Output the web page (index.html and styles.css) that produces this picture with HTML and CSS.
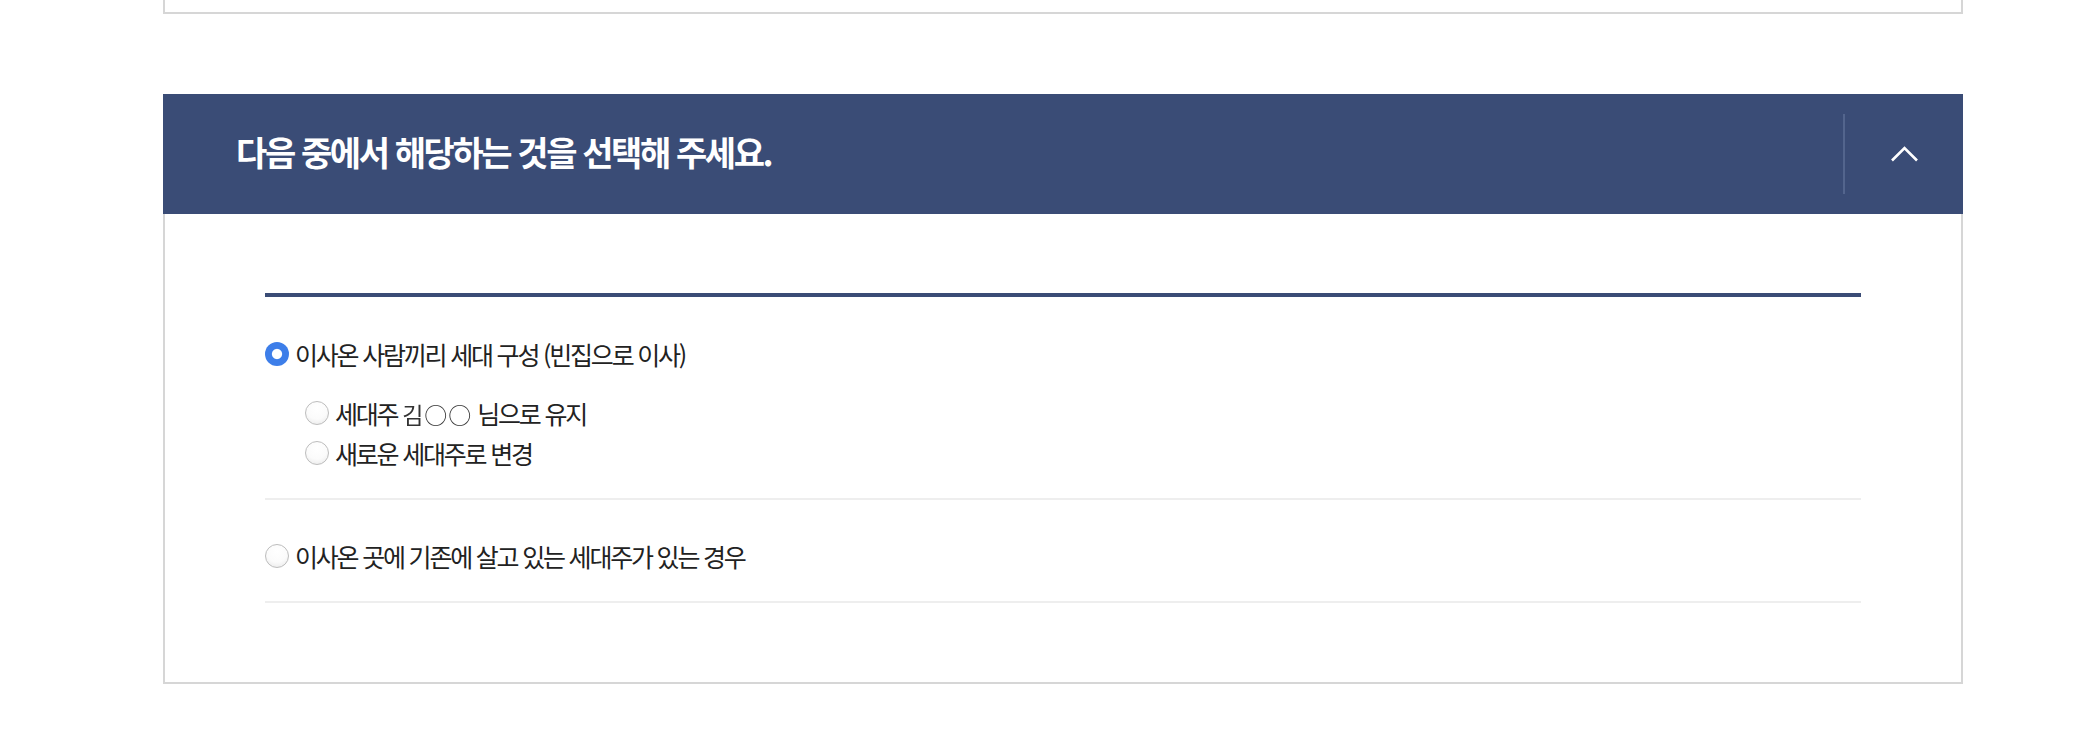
FILE: index.html
```html
<!DOCTYPE html>
<html lang="ko">
<head>
<meta charset="utf-8">
<title>세대 구성 선택</title>
<link rel="stylesheet" href="styles.css">
</head>
<body>
<div class="page">
  <div class="prev-card"></div>

  <section class="panel">
    <header class="panel-head">
      <h2 class="panel-title">다음 중에서 해당하는 것을 선택해 주세요.</h2>
      <div class="panel-toggle">
        <svg class="chev" width="29" height="17" viewBox="0 0 29 17" aria-hidden="true">
          <polyline points="2,15.5 14.5,3 27,15.5" fill="none" stroke="#ffffff" stroke-width="2.6" stroke-linejoin="miter"/>
        </svg>
      </div>
    </header>

    <div class="panel-body">
      <div class="options">
        <div class="option">
          <label class="row">
            <span class="radio checked"></span>
            <span class="label">이사온 사람끼리 세대 구성 (빈집으로 이사)</span>
          </label>
          <div class="sub">
            <label class="row">
              <span class="radio"></span>
              <span class="label">세대주 <span class="masked">김○○</span> 님으로 유지</span>
            </label>
            <label class="row">
              <span class="radio"></span>
              <span class="label">새로운 세대주로 변경</span>
            </label>
          </div>
        </div>
        <div class="option">
          <label class="row">
            <span class="radio"></span>
            <span class="label">이사온 곳에 기존에 살고 있는 세대주가 있는 경우</span>
          </label>
        </div>
      </div>
    </div>
  </section>
</div>
</body>
</html>
```

FILE: styles.css
```css
* { box-sizing: border-box; }

html, body {
  margin: 0;
  padding: 0;
  background: #ffffff;
}

body {
  font-family: "Noto Sans CJK KR", "Noto Sans", sans-serif;
  color: #222222;
}

.page {
  width: 1800px;
  margin-left: 163px;
}

.prev-card {
  height: 14px;
  border: 2px solid #d6d6d6;
  border-top: none;
}

.panel {
  margin-top: 80px;
}

.panel-head {
  height: 120px;
  background: #3a4c76;
  display: flex;
  align-items: center;
}

.panel-title {
  flex: 1;
  margin: -4px 0 0 0;
  padding-left: 73px;
  font-size: 34px;
  font-weight: 700;
  letter-spacing: -2.4px;
  color: #ffffff;
  line-height: 42px;
}

.panel-toggle {
  width: 120px;
  height: 80px;
  border-left: 2px solid #53658d;
  display: flex;
  align-items: center;
  justify-content: center;
}

.chev { display: block; margin-top: -2px; }

.panel-body {
  border: 2px solid #d6d6d6;
  border-top: none;
  padding: 79px 100px 79px 100px;
}

.options {
  border-top: 4px solid #3a4c76;
}

.option {
  padding: 39px 0 25px 0;
  border-bottom: 2px solid #eeeeee;
}

.option + .option {
  padding-top: 38px;
  padding-bottom: 27px;
}

.row {
  display: flex;
  align-items: center;
  height: 36px;
}

.sub {
  margin-top: 21px;
  padding-left: 40px;
}

.sub .row {
  height: 40px;
}

.radio {
  width: 24px;
  height: 24px;
  border-radius: 50%;
  flex: none;
  border: 1px solid #bdbdbd;
  background: radial-gradient(circle at 50% 30%, #ffffff 0%, #fbfbfb 55%, #e6e6e6 100%);
  margin-right: 6px;
}

.radio.checked {
  border: none;
  background: radial-gradient(circle, #ffffff 0, #ffffff 4.6px, #3d7ee9 5.6px);
}

.label {
  font-size: 25px;
  letter-spacing: -2.2px;
  color: #222222;
  line-height: 36px;
  white-space: nowrap;
}

.masked {
  display: inline-block;
  color: #333333;
  filter: blur(0.7px);
  letter-spacing: 1px;
  font-size: 23px;
}
```
